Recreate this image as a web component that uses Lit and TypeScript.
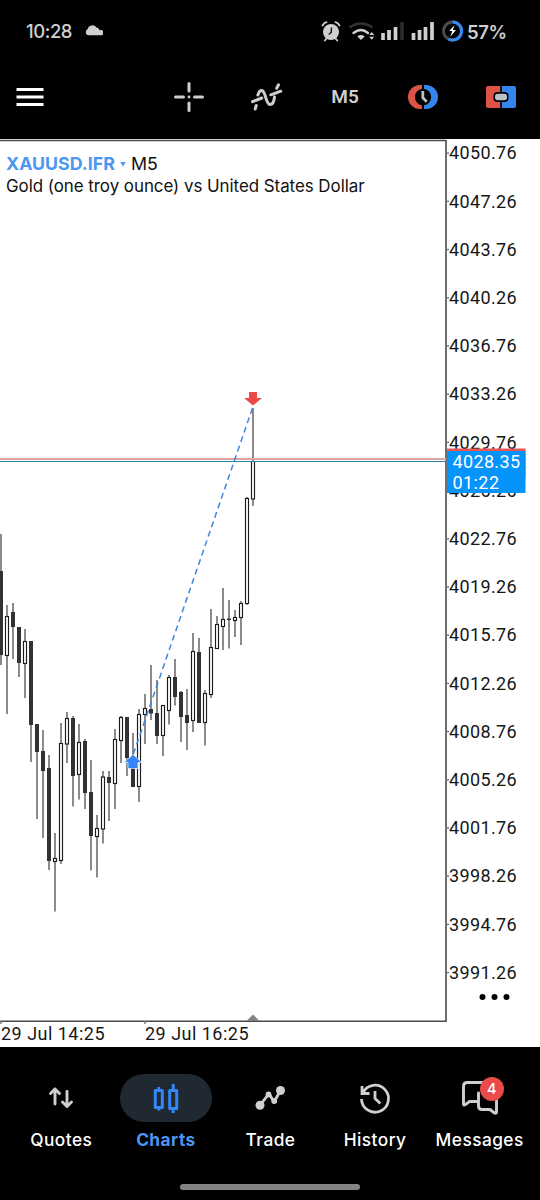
import { LitElement, html, css, svg } from "lit";
import { customElement, property } from "lit/decorators.js";

type Candle = [high: number, top: number, bottom: number, low: number, rising: 0 | 1];

const CANDLES: Candle[] = [
  [534, 571, 655, 665, 0], [605, 616, 656, 714, 1], [603, 612, 627, 659, 0], [627, 627, 663, 677, 0],
  [629, 641, 664, 698, 1], [641, 641, 725, 762, 0], [724, 724, 752, 819, 0], [730, 751, 771, 838, 0],
  [755, 768, 861, 870, 0], [833, 858, 862, 911.5, 1], [723, 743, 861, 864, 1], [712, 718, 744.5, 763, 1],
  [716, 718, 776, 806.5, 0], [724, 742, 775, 799.5, 1], [739, 741, 793, 809, 0], [760, 792, 836, 870.5, 0],
  [815, 828, 837, 877.5, 1], [771, 776.5, 829.5, 843.5, 1], [771, 777, 783, 821, 0], [729, 739, 784, 809, 1],
  [716, 717, 741, 763, 1], [717, 717, 758, 776, 0], [733, 758, 787, 787, 0], [709, 714, 787, 802, 1],
  [694, 708, 715, 744, 1], [665, 709, 713.5, 720, 0], [680, 713, 736, 744, 0], [705, 705, 736, 756, 1],
  [675, 677, 711, 724.5, 1], [659, 677, 697, 705.5, 0], [691, 692, 717, 742, 0], [689, 715, 723, 750, 0],
  [633, 651, 721, 732, 1], [638, 652, 723, 723, 0], [690, 693, 723, 745.5, 1], [609, 647, 695, 698, 1],
  [616, 624, 649, 649, 1], [588, 619, 627, 650, 1], [600, 618.5, 620, 648.5, 0], [610, 617, 621, 637, 1],
  [601, 603, 618, 645, 1], [497, 498, 604, 605, 1], [408, 461, 499.5, 506, 1],
];

@customElement("status-bar")
class StatusBar extends LitElement {
  static styles = css`
    :host { display: flex; align-items: center; height: 62px; padding: 0 34px 0 26px; box-sizing: border-box; color: #cfcfcf; }
    svg { display: block; flex: none; }
    .time { font: 500 18.5px/22px Inter, sans-serif; letter-spacing: -0.45px; width: 59px; }
    .cloud { margin-top: -2px; }
    .tray { display: flex; align-items: center; margin-left: auto; }
    .battery { font: 600 18.5px/22px "Liberation Sans", sans-serif; font-family: Inter, sans-serif; letter-spacing: -0.4px; width: 39px; margin-left: 2px; padding-top: 2px; white-space: nowrap; }
  `;
  render() {
    return html`
      <span class="time">10:28</span>
      <svg class="cloud" width="18" height="12" viewBox="0 0 18 12"><path fill="currentColor" d="M3.500 11.200A3 3 0 0 1 .8 8.200 3 3 0 0 1 2.600 5.300 4.900 4.900 0 0 1 11.500 3.600 3.600 3.600 0 0 1 14.600 6.300 2.600 2.600 0 0 1 17 11.200Z"/></svg>
      <div class="tray">
        <svg width="145" height="24" viewBox="320 19 145 24">
          <circle cx="331" cy="32" r="8" fill="#cfcfcf"/>
          <path d="M322.500 25.500q1.500-3 4-3.400M339.500 25.500q-1.500-3-4-3.400M326.500 38.500l-1.700 2M335.500 38.500l1.700 2" stroke="#cfcfcf" stroke-width="1.800" fill="none" stroke-linecap="round"/>
          <path d="M331.500 27.500l-.3 5-2.500 2" stroke="#111" stroke-width="1.400" fill="none"/>
          <path d="M349.500 27.500q11.500-8 23 0" stroke="#333" stroke-width="2.400" fill="none"/>
          <path d="M353.500 33q7.500-6 14.500 0" stroke="#cfcfcf" stroke-width="2.400" fill="none" stroke-linecap="round"/>
          <path d="M357.300 36.500q3.700-2.800 7.400 0L361 40Z" fill="#cfcfcf"/>
          <path d="M369.200 35l2.500-3 2.500 3zM369.200 36.700l2.500 3 2.500-3z" fill="#cfcfcf"/>
          <path d="M383 40v-7M389 40v-10M395.500 40v-13M413.500 40v-7M419.500 40v-10M425.500 40v-13M432 40v-18" stroke="#cfcfcf" stroke-width="3.700"/>
          <path d="M402 40v-18" stroke="#2b2b2b" stroke-width="3.700"/>
          <circle cx="452.500" cy="31" r="9" fill="none" stroke="#4c4c4c" stroke-width="3"/>
          <path d="M452.500 22a9 9 0 1 1-4 17" fill="none" stroke="#3388f5" stroke-width="3"/>
          <path d="M454.500 25l-5.200 6h3l-2 5.800 5.600-6.800h-3z" fill="#fff"/>
        </svg>
        <span class="battery">57%</span>
      </div>`;
  }
}

@customElement("chart-toolbar")
class ChartToolbar extends LitElement {
  static styles = css`
    :host { display: flex; align-items: center; height: 77px; padding-bottom: 7px; box-sizing: border-box; color: #cfcfcf; }
    .menu { width: 60px; margin-right: auto; display: grid; place-items: center; }
    .tool { width: 78px; display: grid; place-items: center; }
    svg { display: block; }
    .period { font: 600 19px/24px Roboto, sans-serif; }
  `;
  render() {
    return html`
      <div class="menu"><svg width="28" height="20" viewBox="0 0 28 20"><path d="M.5 2.500h27M.5 10h27M.5 17.500h27" stroke="#fff" stroke-width="2.800"/></svg></div>
      <div class="tool"><svg width="32" height="32" viewBox="0 0 32 32"><path d="M16 2.500v7.500M16 22v7.500M2.500 16h8M21.500 16H29.500" stroke="currentColor" stroke-width="3" stroke-linecap="round"/><circle cx="16" cy="16" r="1.400" fill="currentColor"/></svg></div>
      <div class="tool"><svg width="32" height="30" viewBox="251 82 32 30" fill="none" stroke="currentColor" stroke-width="3" stroke-linecap="round" stroke-linejoin="round">
        <path d="M252.500 101.700L261.700 98M270.800 94.800L280.800 91.200M255.200 109L256.200 105.500M257.900 95Q259.500 90.400 261.800 90.600C265.800 91 265.600 104.400 270 104.600Q273.800 104.500 274.500 97M276.700 88.200L278.500 84.800"/>
      </svg></div>
      <div class="tool"><span class="period">M5</span></div>
      <div class="tool"><svg width="32" height="26" viewBox="0 0 32 26">
        <path d="M15 1H13A12 12 0 0 0 13 25H15V21.300A8.400 8.400 0 0 1 15 4.700Z" fill="#dc5347"/>
        <path d="M17 1H19A12 12 0 0 1 19 25H17V21.300A8.400 8.400 0 0 0 17 4.700Z" fill="#3485ee"/>
        <path d="M15.800 7V13.700L19.700 17.700" stroke="#b8c2c8" stroke-width="2.800" fill="none"/>
      </svg></div>
      <div class="tool"><svg width="30" height="22" viewBox="0 0 30 22">
        <path d="M2 0H14.200V22H2A2 2 0 0 1 0 20V2A2 2 0 0 1 2 0Z" fill="#dc5347"/>
        <path d="M15.800 0H28A2 2 0 0 1 30 2V20A2 2 0 0 1 28 22H15.800Z" fill="#3485ee"/>
        <rect x="7.500" y="6" width="15" height="10" rx="4" fill="#000"/><rect x="9" y="7.700" width="12" height="6.600" rx="2.800" fill="#b8c2c8"/>
      </svg></div>`;
  }
}

@customElement("price-chart")
class PriceChart extends LitElement {
  static styles = css`
    :host { display: block; position: relative; height: 908px; background: #fff; color: #111; }
    .plot { display: block; }
    .axis { font: 18px Roboto, sans-serif; fill: #161616; }
    .tag { font: 18px Roboto, sans-serif; fill: #fff; }
    .title { position: absolute; left: 6px; top: 14px; font: 16.95px/22px Inter, sans-serif; white-space: nowrap; }
    .row { display: flex; align-items: center; height: 22px; }
    .symbol { font-weight: 700; font-size: 17.8px; color: #4b97f2; width: 114px; }
    .caret { width: 6px; height: 5px; background: #4b97f2; clip-path: polygon(0 0, 100% 0, 50% 100%); margin-right: 5px; }
    .period { font-size: 17.8px; }
    .name { letter-spacing: -0.05px; }
  `;
  render() {
    const ticks = Array.from({ length: 18 }, (_, i) => ({ y: 153.2 + i * 48.2, label: (4050.76 - i * 3.5).toFixed(2) }));
    return html`
      <svg class="plot" width="540" height="908" viewBox="0 139 540 908">
        <path d="M0 140.500H446M0 1021.300H446" stroke="#4a4a4c" stroke-width="1.600"/>
        <path d="M446 140V1022" stroke="#4a4a4c" stroke-width="1.600"/>
        <path d="M1 1021v3M145 1021v3" stroke="#777" stroke-width="1.500"/>
        <path d="M246.500 1021L253 1014.500 259.500 1021Z" fill="#828282"/>
        ${ticks.map((t) => svg`
          <path d=${`M446 ${t.y}h3`} stroke="#777" stroke-width="1.500"/>
          <text class="axis" x="449" y=${t.y + 6.1} textLength="67.700">${t.label}</text>`)}
        ${CANDLES.map(([high, top, bottom, low, rising], i) => {
          const x = 1 + i * 6;
          return svg`
            <path d=${`M${x} ${high}V${low}`} stroke="#8b8b8b" stroke-width="2"/>
            ${rising
              ? svg`<rect x=${x - 1.5} y=${top + 0.5} width="3" height=${bottom - top - 1} fill="#fff" stroke="#1c1c1c" stroke-width="1.150"/>`
              : svg`<rect x=${x - 2} y=${top} width="4" height=${bottom - top} fill="#303233"/>`}`;
        })}
        <path d="M0 459H446" stroke="#dda3a5" stroke-width="2"/>
        <path d="M0 461.500H446" stroke="#2c86b8" stroke-width="1.100"/>
        <path d="M252.500 408L133 755" stroke="#3f86dc" stroke-width="1.500" stroke-dasharray="6 4" fill="none"/>
        <path d="M249 392h8v6h5l-9 7.500-9-7.500h5z" fill="#ea4a49"/>
        <path d="M133 754.500l9 8h-4v6h-10v-6h-4z" fill="#3385f8" stroke="#fff" stroke-width=".6"/>
        <rect x="447" y="448.500" width="78.500" height="30" fill="#ea5557"/>
        <rect x="447" y="451" width="78.500" height="42" fill="#0593fc"/>
        <text class="tag" x="452.500" y="467.700" textLength="67.500">4028.35</text>
        <text class="tag" x="452.500" y="488.700" textLength="46.500">01:22</text>
        <text class="axis" x="1" y="1039.500" textLength="103.500">29 Jul 14:25</text>
        <text class="axis" x="145" y="1039.500" textLength="103.500">29 Jul 16:25</text>
        <circle cx="482.500" cy="997" r="3"/><circle cx="494.500" cy="997" r="3"/><circle cx="506.500" cy="997" r="3"/>
      </svg>
      <div class="title">
        <div class="row"><span class="symbol">XAUUSD.IFR</span><span class="caret"></span><span class="period">M5</span></div>
        <div class="row name">Gold (one troy ounce) vs United States Dollar</div>
      </div>`;
  }
}

const ICONS: Record<string, unknown> = {
  Quotes: svg`<path d="M15 30V15M10.500 19.500L15 15l4.500 4.500M27 17.500v15M22.500 28L27 32.500l4.500-4.500" stroke-width="2.900"/>`,
  Charts: svg`<path d="M13.800 13v4M13.800 33v3.500M28.200 10v6M28.200 34v5" stroke-width="3" stroke-linecap="butt"/><path d="M10.300 16.500h7v17h-7zM24.700 16.500h7v18h-7z" stroke-width="3" stroke-linejoin="round"/>`,
  Trade: svg`<path d="M11 31.300L20 19.500 25 28 31.500 16.500" stroke-width="2.800"/><circle cx="11" cy="31.300" r="4.500" fill="currentColor" stroke="none"/><circle cx="31.500" cy="16.500" r="4.500" fill="currentColor" stroke="none"/><circle cx="19.500" cy="20.500" r="2.900" fill="currentColor" stroke="none"/><circle cx="25.200" cy="27" r="2.900" fill="currentColor" stroke="none"/>`,
  History: svg`<path d="M9 18.500A13.500 13.500 0 1 1 7.500 25M8 12V19.500H15.500M21 17V24.500L26.300 29.500" stroke-width="2.800" stroke-linecap="butt" stroke-linejoin="miter"/><path d="M7 14L13 20H7z" fill="currentColor" stroke="none"/>`,
  Messages: svg`<path d="M18 27.500H10.500L6 30.800Q4.500 31.500 4.500 29.500V12.500Q4.500 8.500 8.500 8.500H25M19.500 19V32Q19.500 35.500 23 35.500H31L35.500 39Q37.500 40 37.500 38V24" stroke-width="2.900"/>`,
};

@customElement("nav-item")
class NavItem extends LitElement {
  @property() label = "";
  @property({ type: Boolean }) active = false;
  @property({ type: Number }) badge = 0;
  static styles = css`
    :host { flex: 1; display: flex; flex-direction: column; align-items: center; color: #cfcfcf; }
    svg { display: block; }
    .pill { position: relative; width: 92px; height: 48px; border-radius: 24px; display: grid; place-items: center; }
    .pill.on { background: #202832; color: #3485f5; }
    .label { font: 500 17.3px/22px Inter, sans-serif; letter-spacing: .45px; color: #fff; margin-top: 7px; white-space: nowrap; }
    .label.on { color: #4b96f5; font-weight: 700; }
    .badge { position: absolute; left: 46px; top: 3px; width: 24px; height: 24px; border-radius: 50%; background: #ea4a4a; color: #fff; font: 500 15px/24px Inter, sans-serif; text-align: center; }
  `;
  render() {
    const on = this.active ? "on" : "";
    return html`
      <div class="pill ${on}">
        <svg width="42" height="48" viewBox="0 0 42 48" fill="none" stroke="currentColor" stroke-linecap="round" stroke-linejoin="round">${ICONS[this.label]}</svg>
        ${this.badge ? html`<span class="badge">${this.badge}</span>` : ""}
      </div>
      <span class="label ${on}">${this.label}</span>`;
  }
}

@customElement("app-root")
class AppRoot extends LitElement {
  static styles = css`
    :host { display: flex; flex-direction: column; width: 540px; height: 1200px; background: #000; overflow: hidden; }
    .nav { display: flex; padding: 27px 8px 0 9px; height: 136px; box-sizing: border-box; }
    .handle { width: 180px; height: 6px; border-radius: 3px; background: #848484; align-self: center; margin-top: .5px; }
  `;
  render() {
    return html`
      <status-bar></status-bar>
      <chart-toolbar></chart-toolbar>
      <price-chart></price-chart>
      <nav class="nav">
        <nav-item label="Quotes"></nav-item>
        <nav-item label="Charts" active></nav-item>
        <nav-item label="Trade"></nav-item>
        <nav-item label="History"></nav-item>
        <nav-item label="Messages" badge="4"></nav-item>
      </nav>
      <div class="handle"></div>`;
  }
}
